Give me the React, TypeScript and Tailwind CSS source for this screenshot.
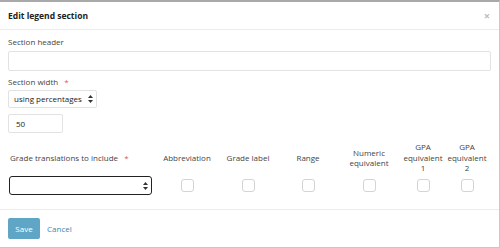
const font = { fontFamily: '"Open Sans", "Noto Sans", sans-serif' }

function Arrows() {
  return (
    <svg width="5" height="8" viewBox="0 0 5 8" className="shrink-0">
      <path d="M2.5 0 L5 3 L0 3 Z" fill="#333" />
      <path d="M2.5 8 L5 5 L0 5 Z" fill="#333" />
    </svg>
  )
}

const columns = [
  { label: <>Abbreviation</>, w: "w-[60px]" },
  { label: <>Grade label</>, w: "w-[62px]" },
  { label: <>Range</>, w: "w-[58px]" },
  { label: <>Numeric<br />equivalent</>, w: "w-[64px]" },
  { label: <>GPA<br />equivalent<br />1</>, w: "w-[44px]" },
  { label: <>GPA<br />equivalent<br />2</>, w: "w-[44px]" },
]

export default function App() {
  return (
    <div
      className="w-[500px] h-[248px] bg-white text-[#333] text-[8px] leading-[12px] border-t-2 border-b border-r border-[#c8c8c8] border-t-[#a9a9a9] flex flex-col overflow-hidden"
      style={font}
    >
      {/* Header */}
      <div className="h-[28px] flex items-center justify-between pl-2 pr-[9px] border-b border-[#ececec] shrink-0">
        <span className="font-bold text-[8.5px] text-[#222]">Edit legend section</span>
        <span className="text-[#bbb] text-[11px] font-bold">×</span>
      </div>

      {/* Body */}
      <div className="flex-1 px-2 pt-[6px] flex flex-col">
        <label className="h-[12px] flex items-center text-[#444]">Section header</label>
        <div className="mt-[3px] h-[20px] w-[483px] border border-[#e2e2e2] rounded-[2px]" />

        <label className="mt-[5px] h-[12px] flex items-center text-[#444]">
          Section width <span className="text-[#e0584a] ml-[6px]">*</span>
        </label>
        <div className="mt-[2px] h-[18px] w-[89px] border border-[#e2e2e2] rounded-[2px] flex items-center justify-between pl-[5px] pr-[3px]">
          <span className="text-[#222] whitespace-nowrap">using percentages</span>
          <Arrows />
        </div>
        <div className="mt-[6px] h-[19px] w-[55px] border border-[#e2e2e2] rounded-[2px] flex items-center pl-[7px] text-[#222]">
          50
        </div>

        {/* Grade translations table */}
        <div className="mt-[8px] flex items-center h-[34px] text-[#444]">
          <div className="w-[149px] pl-[2px]">
            Grade translations to include <span className="text-[#e0584a] ml-[4px]">*</span>
          </div>
          {columns.map((c, i) => (
            <div key={i} className={`${c.w} text-center leading-[10.5px]`}>
              {c.label}
            </div>
          ))}
        </div>
        <div className="mt-px flex items-center h-[19px]">
          <div className="w-[149px] pl-px">
            <div className="w-[143px] h-[19px] border-[1.5px] border-[#222] rounded-[3px] flex items-center justify-end pr-[3px]">
              <Arrows />
            </div>
          </div>
          {columns.map((c, i) => (
            <div key={i} className={`${c.w} flex justify-center`}>
              <div className="w-[13px] h-[13px] border border-[#d4d4d4] rounded-[3px] bg-white" />
            </div>
          ))}
        </div>
      </div>

      {/* Footer */}
      <div className="h-[38px] border-t border-[#ececec] flex items-center gap-[7px] px-2 shrink-0">
        <button className="h-[21px] w-[32px] bg-[#5fa6c6] text-white rounded-[2px] text-[8px]">Save</button>
        <span className="text-[#3f86ad]">Cancel</span>
      </div>
    </div>
  )
}
